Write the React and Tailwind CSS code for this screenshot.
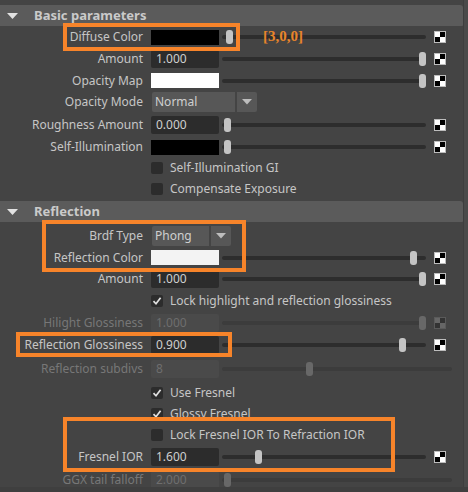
import React from "react";

const FONT = "font-['Noto_Sans','DejaVu_Sans',sans-serif]";

function Checker({ disabled }) {
  const a = disabled ? "bg-[#666]" : "bg-white";
  const b = disabled ? "bg-[#333]" : "bg-black";
  return (
    <div className={`w-[12px] h-[12px] border ${disabled ? "border-[#5a5a5a]" : "border-[#bdbdbd]"} grid grid-cols-2 grid-rows-2 shrink-0`}>
      <div className={a} />
      <div className={b} />
      <div className={b} />
      <div className={a} />
    </div>
  );
}

function Slider({ pos, width = 204, disabled }) {
  return (
    <div className="relative h-[14px] shrink-0" style={{ width }}>
      <div className={`absolute left-0 right-0 top-[5px] h-[4px] rounded-full ${disabled ? "bg-[#3c3c3c]" : "bg-[#2d2d2d]"}`} />
      <div
        className={`absolute top-0 w-[7px] h-[14px] rounded-[3px] ${disabled ? "bg-[#686868]" : "bg-[#c4c4c4]"}`}
        style={{ left: pos }}
      />
    </div>
  );
}

function Label({ children, disabled }) {
  return (
    <div className={`w-[143px] shrink-0 text-right whitespace-nowrap ${disabled ? "text-[#777]" : ""}`}>
      {children}
    </div>
  );
}

function Input({ value, disabled }) {
  return (
    <div
      className={`w-[68px] h-[18px] shrink-0 rounded-[2px] pl-[5px] flex items-center ${
        disabled ? "bg-[#4a4a4a] text-[#6e6e6e]" : "bg-[#2c2c2c] text-[#cfcfcf]"
      }`}
    >
      {value}
    </div>
  );
}

function Swatch({ color }) {
  return <div className={`w-[68px] h-[15px] shrink-0 ${color}`} />;
}

function Row({ h, label, disabled, control, slider, checker = true }) {
  return (
    <div className="flex items-center shrink-0" style={{ height: h }}>
      <Label disabled={disabled}>{label}</Label>
      <div className="ml-[8px] flex items-center">
        {control}
        {slider !== undefined && (
          <div className="ml-[3px]">
            <Slider pos={slider.pos} width={slider.width} disabled={disabled} />
          </div>
        )}
        {checker && slider !== undefined && (!slider.width || slider.width === 204) && (
          <div className="ml-[8px]">
            <Checker disabled={disabled} />
          </div>
        )}
      </div>
    </div>
  );
}

function CheckRow({ h, label, checked }) {
  return (
    <div className="flex items-center shrink-0" style={{ height: h }}>
      <div className="w-[151px] shrink-0" />
      <div className="w-[12px] h-[12px] rounded-[2px] bg-[#2c2c2c] flex items-center justify-center shrink-0">
        {checked && (
          <svg width="10" height="10" viewBox="0 0 10 10">
            <path d="M1.5 5.2 L4 7.8 L8.6 1.8" fill="none" stroke="#e0e0e0" strokeWidth="1.7" />
          </svg>
        )}
      </div>
      <div className="ml-[7px] whitespace-nowrap">{label}</div>
    </div>
  );
}

function Dropdown({ value, w }) {
  return (
    <div className="flex h-[20px] shrink-0 gap-[2px] ml-[1px]">
      <div className="rounded-l-[2px] bg-[#575757] pl-[3px] flex items-center text-[#cfcfcf]" style={{ width: w }}>
        {value}
      </div>
      <div className="w-[20px] rounded-r-[2px] bg-[#575757] flex items-center justify-center">
        <svg width="10" height="6" viewBox="0 0 10 6">
          <path d="M0 0 L10 0 L5 5.5 Z" fill="#bdbdbd" />
        </svg>
      </div>
    </div>
  );
}

function Header({ title, h = 21 }) {
  return (
    <div className="flex items-center shrink-0 bg-[#5b5b5b] rounded-tr-[3px] rounded-br-[1px]" style={{ height: h }}>
      <svg className="ml-[7px]" width="11" height="6" viewBox="0 0 11 6">
        <path d="M0 0 L11 0 L5.5 6 Z" fill="#e2e2e2" />
      </svg>
      <div className="ml-[16px] font-bold text-[#cacaca] text-[13px]">{title}</div>
    </div>
  );
}

function Box({ x, y, w, h }) {
  return (
    <div
      className="absolute border-[4px] border-[#f7842a] pointer-events-none"
      style={{ left: x, top: y, width: w, height: h }}
    />
  );
}

export default function App() {
  return (
    <div className={`relative w-[468px] h-[492px] bg-[#444444] overflow-hidden flex flex-col text-[12px] leading-none text-[#c6c6c6] ${FONT}`}>
      <div className="flex h-[487px] shrink-0">
        <div className="w-[463px] flex flex-col pt-[5px] overflow-hidden">
          <Header title="Basic parameters" h={21} />
          <Row h={22} label="Diffuse Color" control={<Swatch color="bg-black" />} slider={{ pos: 4 }} checker={false} />
          <Row h={22} label="Amount" control={<Input value="1.000" />} slider={{ pos: 197 }} />
          <Row h={21} label="Opacity Map" control={<Swatch color="bg-white" />} slider={{ pos: 197 }} />
          <div className="flex items-center h-[22px] shrink-0">
            <Label>Opacity Mode</Label>
            <div className="ml-[8px]">
              <Dropdown value="Normal" w={83} />
            </div>
          </div>
          <Row h={23} label="Roughness Amount" control={<Input value="0.000" />} slider={{ pos: 2 }} />
          <Row h={22} label="Self-Illumination" control={<Swatch color="bg-black" />} slider={{ pos: 2 }} />
          <CheckRow h={20} label="Self-Illumination GI" />
          <CheckRow h={21} label="Compensate Exposure" />
          <div className="h-[2px] shrink-0" />
          <Header title="Reflection" h={21} />
          <div className="h-[3px] shrink-0" />
          <div className="flex items-center h-[22px] shrink-0">
            <Label>Brdf Type</Label>
            <div className="ml-[8px]">
              <Dropdown value="Phong" w={57} />
            </div>
          </div>
          <Row h={21} label="Reflection Color" control={<Swatch color="bg-[#f3f3f3]" />} slider={{ pos: 188 }} />
          <Row h={22} label="Amount" control={<Input value="1.000" />} slider={{ pos: 197 }} />
          <CheckRow h={22} label="Lock highlight and reflection glossiness" checked />
          <Row h={22} label="Hilight Glossiness" disabled control={<Input value="1.000" disabled />} slider={{ pos: 197 }} />
          <Row h={22} label="Reflection Glossiness" control={<Input value="0.900" />} slider={{ pos: 177 }} />
          <Row h={26} label="Reflection subdivs" disabled control={<Input value="8" disabled />} slider={{ pos: 84, width: 230 }} />
          <CheckRow h={22} label="Use Fresnel" checked />
          <CheckRow h={20} label="Glossy Fresnel" checked />
          <CheckRow h={22} label="Lock Fresnel IOR To Refraction IOR" />
          <Row h={22} label="Fresnel IOR" control={<Input value="1.600" />} slider={{ pos: 33 }} />
          <Row h={24} label="GGX tail falloff" disabled control={<Input value="2.000" disabled />} slider={{ pos: 2, width: 230 }} />
        </div>
        <div className="w-[5px] flex flex-col border-l border-[#3e3e3e] bg-[#4a4a4a]" />
      </div>
      <div className="flex-1 bg-[#3f3f3f]" />

      <div className="absolute left-[263px] top-[29px] text-[15px] font-bold text-[#e8852a] font-['Liberation_Serif',serif]">
        [3,0,0]
      </div>
      <div className="absolute left-[434px] top-[31px]">
        <Checker />
      </div>

      <Box x={63} y={23} w={177} h={28} />
      <Box x={42} y={220} w={204} h={52} />
      <Box x={16} y={332} w={216} h={25} />
      <Box x={63} y={417} w={332} h={55} />
    </div>
  );
}
